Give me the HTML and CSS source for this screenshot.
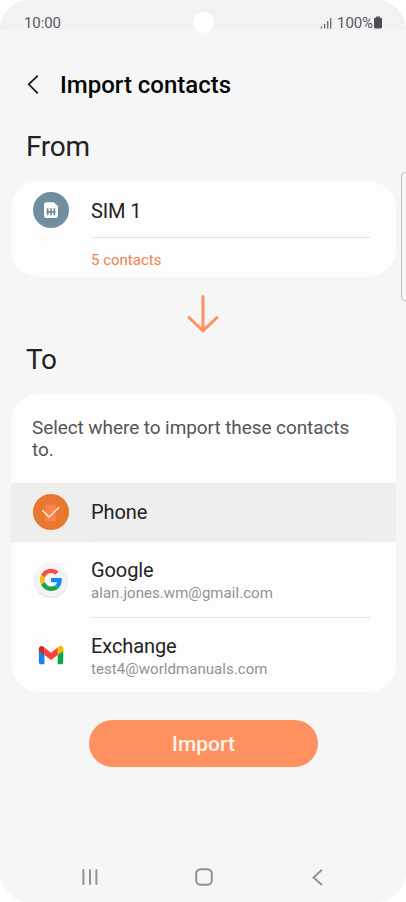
FILE: index.html
```html
<!DOCTYPE html>
<html lang="en">
<head>
    <meta charset="UTF-8">
    <title>Import contacts</title>
    <link rel="stylesheet" href="styles.css">
</head>
<body>
    <div class="screen">
        <!-- Status bar -->
        <div class="status-bar">
            <span class="time">10:00</span>
            <span class="camera"></span>
            <div class="status-right">
                <svg class="signal" width="12" height="12" viewBox="0 0 12 12">
                    <path d="M1.4 9.5v2M4.6 7v4.5M7.7 4v7.5M10.7 1v10.5" stroke="#6a6a6c" stroke-width="1.3" fill="none"/>
                </svg>
                <span class="percent">100%</span>
                <svg class="battery" width="8" height="13" viewBox="0 0 8 13">
                    <path d="M2.2 0.4h3.6v1.3h1q1.2 0 1.2 1.2v8.2q0 1.4-1.4 1.4h-5.2q-1.4 0-1.4-1.4v-8.2q0-1.2 1.2-1.2h1z" fill="#4d4d4f"/>
                </svg>
            </div>
        </div>

        <header class="header">
            <a href="#" class="back">
                <svg width="12" height="20" viewBox="0 0 12 20">
                    <path d="M10.8 0.7 1.7 9.3 10.8 18.4" stroke="#111" stroke-width="1.6" fill="none"/>
                </svg>
            </a>
            <h1>Import contacts</h1>
        </header>

        <main>
            <h2 class="from-title">From</h2>
            <section class="card source">
                <div class="row sim-row">
                    <svg class="icon" width="36" height="36" viewBox="0 0 36 36">
                        <circle cx="18" cy="18" r="18" fill="#728ca0"/>
                        <path d="M13.5 10.3h7.3l4.2 4v9.2q0 2.5-2.5 2.5h-9q-2.5 0-2.5-2.5v-10.7q0-2.5 2.5-2.5z" fill="#fbfcfd"/>
                        <path d="M14.7 16.3v7M18 16.3v7M21.3 16.3v7M13.5 19.8h9" stroke="#728ca0" stroke-width="1.7" fill="none"/>
                    </svg>
                    <span class="name">SIM 1</span>
                </div>
                <p class="count">5 contacts</p>
            </section>

            <svg class="arrow" width="32" height="38" viewBox="0 0 32 38">
                <path d="M16 1.5v34M2 22.5 16 35.8 30 22.5" stroke="#fe915f" stroke-width="3" stroke-linecap="round" stroke-linejoin="round" fill="none"/>
            </svg>

            <h2 class="to-title">To</h2>
            <section class="card target">
                <p class="hint">Select where to import these contacts to.</p>
                <div class="row phone-row">
                    <svg class="icon" width="36" height="36" viewBox="0 0 36 36">
                        <circle cx="18" cy="18" r="18" fill="#e87730"/>
                        <rect x="12" y="10.7" width="11" height="16.5" rx="2" fill="#ff824d"/>
                        <path d="M9.3 16.3 16 23 26.2 13.3" stroke="#fff0e4" stroke-width="1.3" fill="none"/>
                    </svg>
                    <span class="name">Phone</span>
                </div>
                <div class="row account google">
                    <svg class="icon" width="36" height="36" viewBox="0 0 36 36">
                        <circle cx="18" cy="18.7" r="17" fill="#d9d9d9"/>
                        <circle cx="18" cy="17.9" r="17" fill="#f4f4f4"/>
                        <g transform="translate(6.9 6.7) scale(.465)">
                            <path fill="#f34f43" d="M24 9.5c3.54 0 6.71 1.22 9.21 3.6l6.85-6.85C35.9 2.38 30.47 0 24 0 14.62 0 6.51 5.38 2.56 13.22l7.98 6.19C12.43 13.72 17.74 9.5 24 9.5z"/>
                            <path fill="#1287f8" d="M46.98 24.55c0-1.57-.15-3.09-.38-4.55H24v9.02h12.94c-.58 2.96-2.26 5.48-4.78 7.18l7.73 6c4.51-4.18 7.09-10.36 7.09-17.65z"/>
                            <path fill="#fbbc05" d="M10.53 28.59c-.48-1.45-.76-2.99-.76-4.59s.27-3.14.76-4.59l-7.98-6.19C.92 16.46 0 20.12 0 24c0 3.88.92 7.54 2.56 10.78l7.97-6.19z"/>
                            <path fill="#13a84c" d="M24 48c6.48 0 11.93-2.13 15.89-5.81l-7.73-6c-2.15 1.45-4.92 2.3-8.16 2.3-6.26 0-11.57-4.22-13.47-9.91l-7.98 6.19C6.51 42.62 14.62 48 24 48z"/>
                        </g>
                    </svg>
                    <div class="info">
                        <span class="name">Google</span>
                        <span class="mail">alan.jones.wm@gmail.com</span>
                    </div>
                </div>
                <div class="row account exchange">
                    <svg class="icon" width="36" height="36" viewBox="0 0 36 36">
                        <g transform="translate(-.1 -1.4)">
                            <path d="M6 11.5v14.5q0 1.6 1.6 1.6h3.9V15z" fill="#1883f5"/>
                            <path d="M24.8 15v12.6h3.9q1.6 0 1.6-1.6V11.5z" fill="#10a64a"/>
                            <path d="M24.8 11v7.5l5.5-4.2v-2.3c0-2.8-2.8-3.6-4.4-2.2z" fill="#fbbc05"/>
                            <path d="M11.5 18.5V11l6.65 5.1L24.8 11v7.5l-6.65 5z" fill="#f94436"/>
                            <path d="M6 12v2.3l5.5 4.2V11l-1.2-1c-1.6-1.3-4.3-.6-4.3 2z" fill="#cf2b24"/>
                        </g>
                    </svg>
                    <div class="info">
                        <span class="name">Exchange</span>
                        <span class="mail">test4@worldmanuals.com</span>
                    </div>
                </div>
            </section>

            <button type="button" class="import-btn">Import</button>
        </main>

        <!-- Edge panel handle -->
        <div class="edge-handle"></div>

        <nav class="nav-bar">
            <svg width="18" height="18" viewBox="0 0 18 18">
                <path d="M2.4 2v14M9 2v14M15.4 2v14" stroke="#929292" stroke-width="2" stroke-linecap="round"/>
            </svg>
            <svg width="18" height="18" viewBox="0 0 18 18">
                <rect x="1.2" y="1.2" width="15.6" height="15.6" rx="4.5" stroke="#929292" stroke-width="2" fill="none"/>
            </svg>
            <svg width="18" height="18" viewBox="0 0 18 18">
                <path d="M13.4 2.3 5.6 9.5 13.4 16.5" stroke="#929292" stroke-width="2" stroke-linecap="round" fill="none"/>
            </svg>
        </nav>
    </div>
</body>
</html>
```
FILE: styles.css
```css
body {
    margin: 0;
    background-color: #fff;
    font-family: Roboto, "Liberation Sans", sans-serif;
}

.screen {
    position: relative;
    width: 406px;
    height: 902px;
    display: flex;
    flex-direction: column;
    background-color: #f6f6f6;
    border-radius: 30px;
    overflow: hidden;
}

h1, h2, p {
    margin: 0;
    font-weight: 400;
}

svg {
    display: block;
    flex-shrink: 0;
}

/* Status bar */
.status-bar {
    height: 30px;
    box-sizing: border-box;
    padding: 13px 24px 0 24px;
    display: grid;
    grid-template-columns: 1fr 21px 1fr;
    background-color: #f2f2f4;
    color: #5a5a5c;
    font-size: 15px;
    line-height: 20px;
    letter-spacing: -0.1px;
}

.camera {
    width: 21px;
    height: 21px;
    margin-top: -1px;
    background-color: #fff;
    border-radius: 50%;
}

.status-right {
    display: flex;
    justify-content: flex-end;
    align-items: center;
    height: 20px;
}

.signal, .battery {
    margin-bottom: 1px;
}

.percent {
    margin: 0 1px 0 5px;
}

/* Header */
.header {
    display: flex;
    align-items: center;
    height: 30px;
    margin-top: 40px;
    padding-left: 27px;
}

.header h1 {
    margin-left: 21px;
    font-size: 24px;
    font-weight: 500;
    line-height: 30px;
    color: #050505;
}

/* Content */
main {
    display: flex;
    flex-direction: column;
    padding: 0 10px 0 11px;
}

h2 {
    padding-left: 15px;
    font-size: 28px;
    line-height: 34px;
    letter-spacing: -0.3px;
    color: #222;
}

.from-title {
    margin-top: 30px;
}

.card {
    background-color: #fdfdfd;
    border-radius: 28px;
    overflow: hidden;
}

.source {
    height: 96px;
    margin-top: 17px;
}

.row {
    position: relative;
    display: flex;
    align-items: center;
    padding-left: 22px;
}

.row .icon {
    margin-right: 22px;
}

.name {
    font-size: 20px;
    line-height: 24px;
    letter-spacing: -0.1px;
    color: #222;
}

.sim-row {
    height: 57px;
}

.sim-row .name {
    padding-top: 2px;
}

/* Thin separators start under the text, not under the icon */
.row::after {
    content: "";
    position: absolute;
    left: 80px;
    right: 26px;
    bottom: 0;
    height: 1px;
    background-color: #e4e4e4;
}

.exchange::after {
    display: none;
}

.count {
    margin-top: 11px;
    padding-left: 80px;
    font-size: 15px;
    line-height: 22px;
    color: #ee8250;
}

.arrow {
    align-self: center;
    margin: 18px 2px 0 0;
}

.to-title {
    margin-top: 10px;
}

.target {
    height: 298px;
    margin-top: 17px;
}

.hint {
    height: 89px;
    box-sizing: border-box;
    padding: 23px 30px 0 21px;
    font-size: 19px;
    line-height: 22px;
    letter-spacing: -0.08px;
    color: #555;
}

.phone-row {
    height: 59px;
    box-sizing: border-box;
    padding-bottom: 1px;
    background-color: #eee;
}

.phone-row::after {
    bottom: 2px;
    background-color: #e6e6e6;
}

.account {
    height: 76px;
}

.info {
    display: flex;
    flex-direction: column;
    padding-top: 2px;
}

.mail {
    font-size: 15px;
    line-height: 23px;
    letter-spacing: 0.05px;
    color: #929292;
}

.import-btn {
    align-self: center;
    width: 229px;
    height: 47px;
    margin-top: 28px;
    padding: 0;
    border: none;
    border-radius: 24px;
    background-color: #ff9160;
    color: #fff4ea;
    font-family: inherit;
    font-size: 21px;
    font-weight: 500;
}

/* Edge panel handle */
.edge-handle {
    position: absolute;
    left: 401px;
    top: 172px;
    width: 12px;
    height: 127px;
    border: 1px solid #bcbcbc;
    border-radius: 4px;
    background-color: #f9f9f9;
}

/* Navigation bar */
.nav-bar {
    display: flex;
    justify-content: space-between;
    margin-top: auto;
    padding: 0 80px 16px 81px;
}
```
